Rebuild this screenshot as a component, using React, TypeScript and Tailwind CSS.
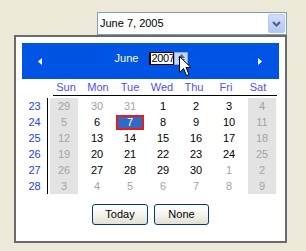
// Windows XP style date picker dropdown, open on June 2005.

const weeks = [23, 24, 25, 26, 27, 28]
const days = ['Sun', 'Mon', 'Tue', 'Wed', 'Thu', 'Fri', 'Sat']

const rows: number[][] = [
  [29, 30, 31, 1, 2, 3, 4],
  [5, 6, 7, 8, 9, 10, 11],
  [12, 13, 14, 15, 16, 17, 18],
  [19, 20, 21, 22, 23, 24, 25],
  [26, 27, 28, 29, 30, 1, 2],
  [3, 4, 5, 6, 7, 8, 9],
]

function isOtherMonth(r: number, c: number) {
  if (r === 0) return c < 3
  if (r === 4) return c > 4
  return r === 5
}

function XpButton({ label, width }: { label: string; width: string }) {
  return (
    <button
      className={`${width} h-[21px] rounded-[3px] border border-[#003c74] bg-gradient-to-b from-white via-[#f4f3ee] to-[#e3e0d2] text-[11px] text-black`}
    >
      {label}
    </button>
  )
}

export default function App() {
  return (
    <div className="relative h-[251px] w-[306px] overflow-hidden bg-[#ece9d8] pt-[12px] font-['Liberation_Sans',Arial,sans-serif] text-[11px]">
      {/* Combo box */}
      <div className="ml-[97px] flex h-[23px] w-[190px] items-center justify-between border border-[#7f9db9] bg-white p-[1px]">
        <span className="pl-[1px] text-black">June 7, 2005</span>
        <div className="flex h-[19px] w-[17px] items-center justify-center rounded-[2px] border border-[#b6c9f2] bg-gradient-to-b from-[#d3defb] to-[#b2c6f5]">
          <svg width="9" height="6" viewBox="0 0 9 6">
            <path d="M1 1 L4.5 4.5 L8 1" fill="none" stroke="#4d6185" strokeWidth="2" />
          </svg>
        </div>
      </div>

      {/* Popup */}
      <div className="ml-[14px] flex h-[208px] w-[273px] flex-col border-2 border-[#6b6b6b] bg-white p-[6px]">
        {/* Month header */}
        <div className="flex h-[36px] items-center justify-between bg-[#0054e3] pl-[16px] pr-[17px]">
          <svg width="4" height="7" viewBox="0 0 4 7">
            <polygon points="4,0 0,3.5 4,7" fill="white" />
          </svg>
          <div className="mb-[5px] ml-[3px] flex items-center">
            <span className="text-white">June</span>
            <div className="ml-[11px] flex h-[13px] items-stretch">
              <div className="flex w-[25px] items-center overflow-hidden border border-l-2 border-black bg-white leading-none tracking-[-0.3px] text-black">
                2007
              </div>
              <div className="flex w-[14px] flex-col items-center justify-center gap-[1px] border border-[#8aa6d8] bg-[#c5d5fb]">
                <svg width="7" height="4" viewBox="0 0 7 4">
                  <polygon points="0,4 3.5,0 7,4" fill="#4d6185" />
                </svg>
                <svg width="7" height="4" viewBox="0 0 7 4">
                  <polygon points="0,0 3.5,4 7,0" fill="#4d6185" />
                </svg>
              </div>
            </div>
          </div>
          <svg width="4" height="7" viewBox="0 0 4 7">
            <polygon points="0,0 4,3.5 0,7" fill="white" />
          </svg>
        </div>

        {/* Day names */}
        <div className="flex h-[16px] items-center pl-[28px]">
          {days.map((d) => (
            <div key={d} className="w-[32px] text-center text-[#4f4ff0]">
              {d}
            </div>
          ))}
        </div>
        <div className="ml-[31px] h-px w-[224px] bg-black" />

        {/* Weeks + dates */}
        <div className="mt-[2px] flex">
          <div className="flex w-[28px] flex-col">
            {weeks.map((w) => (
              <div key={w} className="flex h-[16px] items-center justify-center text-[#2340ea]">
                {w}
              </div>
            ))}
          </div>
          <div className="h-[96px] w-px bg-black" />
          <div className="grid grid-cols-[repeat(7,33px)]">
            {rows.map((row, r) =>
              row.map((n, c) => {
                const weekend = c === 0 || c === 6
                const gray = weekend || isOtherMonth(r, c)
                const selected = r === 1 && c === 2
                return (
                  <div key={`${r}-${c}`} className="flex h-[16px] items-center">
                    <div
                      className={`ml-[2px] flex w-[28px] items-center justify-center ${
                        weekend ? 'h-[16px] bg-[#e3e3e3]' : 'h-[15px]'
                      } ${
                        selected
                          ? 'border-2 border-[#e81c1c] bg-[#316ac5] text-white'
                          : gray
                            ? 'text-[#a3a3a3]'
                            : 'text-black'
                      }`}
                    >
                      {n}
                    </div>
                  </div>
                )
              })
            )}
          </div>
        </div>

        {/* Buttons */}
        <div className="mt-[10px] flex justify-center gap-[6px]">
          <XpButton label="Today" width="w-[56px]" />
          <XpButton label="None" width="w-[55px]" />
        </div>
      </div>

      {/* Mouse pointer over the spinner */}
      <svg className="absolute left-[179px] top-[56px]" width="13" height="21" viewBox="0 0 13 21">
        <path
          d="M0.5 0.5 L0.5 16.5 L4.5 12.5 L7.5 19.5 L10 18.5 L7 11.5 L12 11.5 Z"
          fill="white"
          stroke="black"
          strokeWidth="1"
        />
      </svg>
    </div>
  )
}
